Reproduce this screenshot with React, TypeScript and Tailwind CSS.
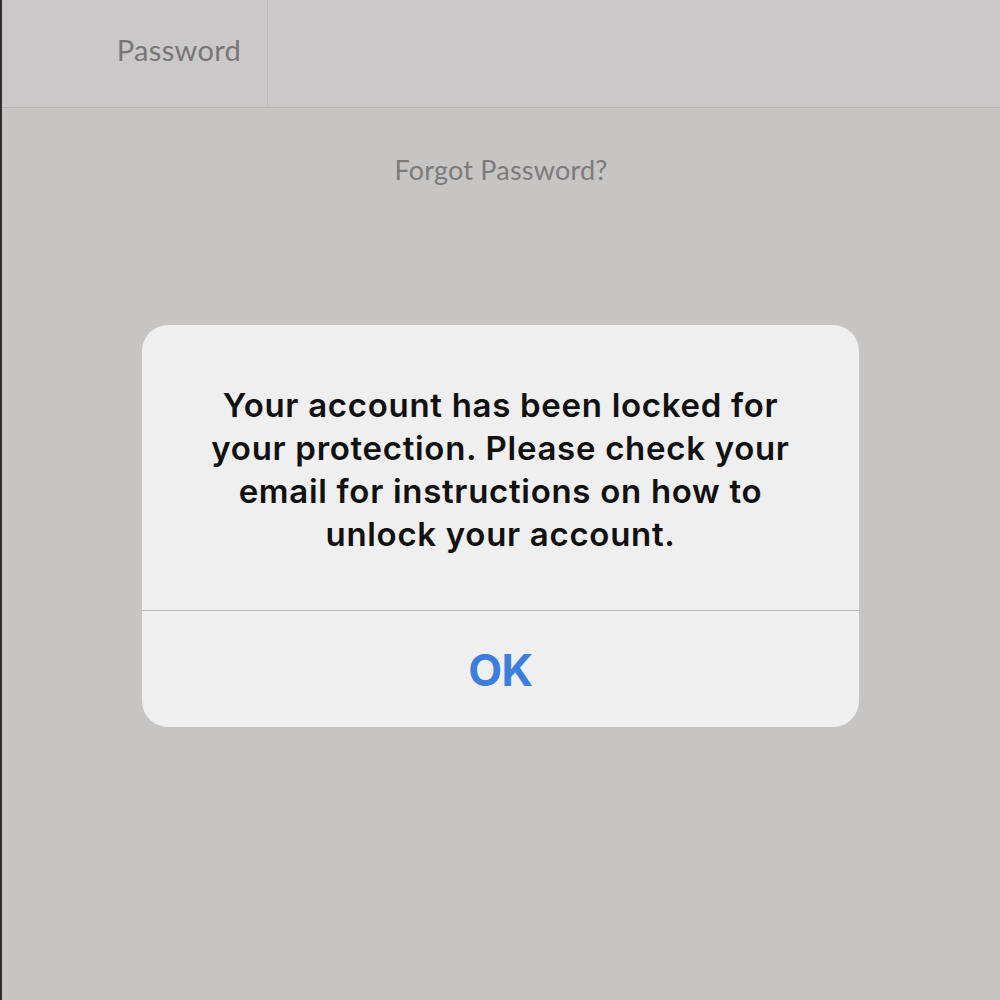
export default function App() {
  return (
    <div className="relative w-[1000px] h-[1000px] overflow-hidden bg-[#c6c5c3] border-l-2 border-[#2e2e2e]">
      <div className="flex h-[108px] bg-[#cac8c8] border-b border-[#b6b3b3]">
        <div className="w-[266px] flex items-center justify-end pr-[26px] pb-[8px] border-r border-[#bfbcbc]">
          <span className="text-[29px] text-[#787676] tracking-[0.3px]" style={{ fontFamily: "Lato, 'Open Sans', sans-serif" }}>Password</span>
        </div>
        <div className="flex-1" />
      </div>
      <div className="flex justify-center pt-[42px]">
        <span className="text-[27px] text-[#7d7b7b] tracking-[0.2px]" style={{ fontFamily: "Lato, 'Open Sans', sans-serif" }}>Forgot Password?</span>
      </div>

      <div className="absolute left-[140px] top-[325px] w-[717px] rounded-[26px] bg-[#f0efef] flex flex-col" style={{ fontFamily: "Inter, 'Noto Sans', sans-serif" }}>
        <div className="pt-[59px] pb-[54px] px-4 text-center text-[33px] leading-[43px] font-semibold text-[#111] tracking-[0.7px]">
          Your account has been locked for<br />
          your protection. Please check your<br />
          email for instructions on how to<br />
          unlock your account.
        </div>
        <div className="border-t border-[#b8b6b6] h-[117px] flex items-center justify-center pt-[2px]">
          <span className="text-[44px] font-bold text-[#3b7ee0] tracking-[-0.5px]">OK</span>
        </div>
      </div>
    </div>
  );
}
